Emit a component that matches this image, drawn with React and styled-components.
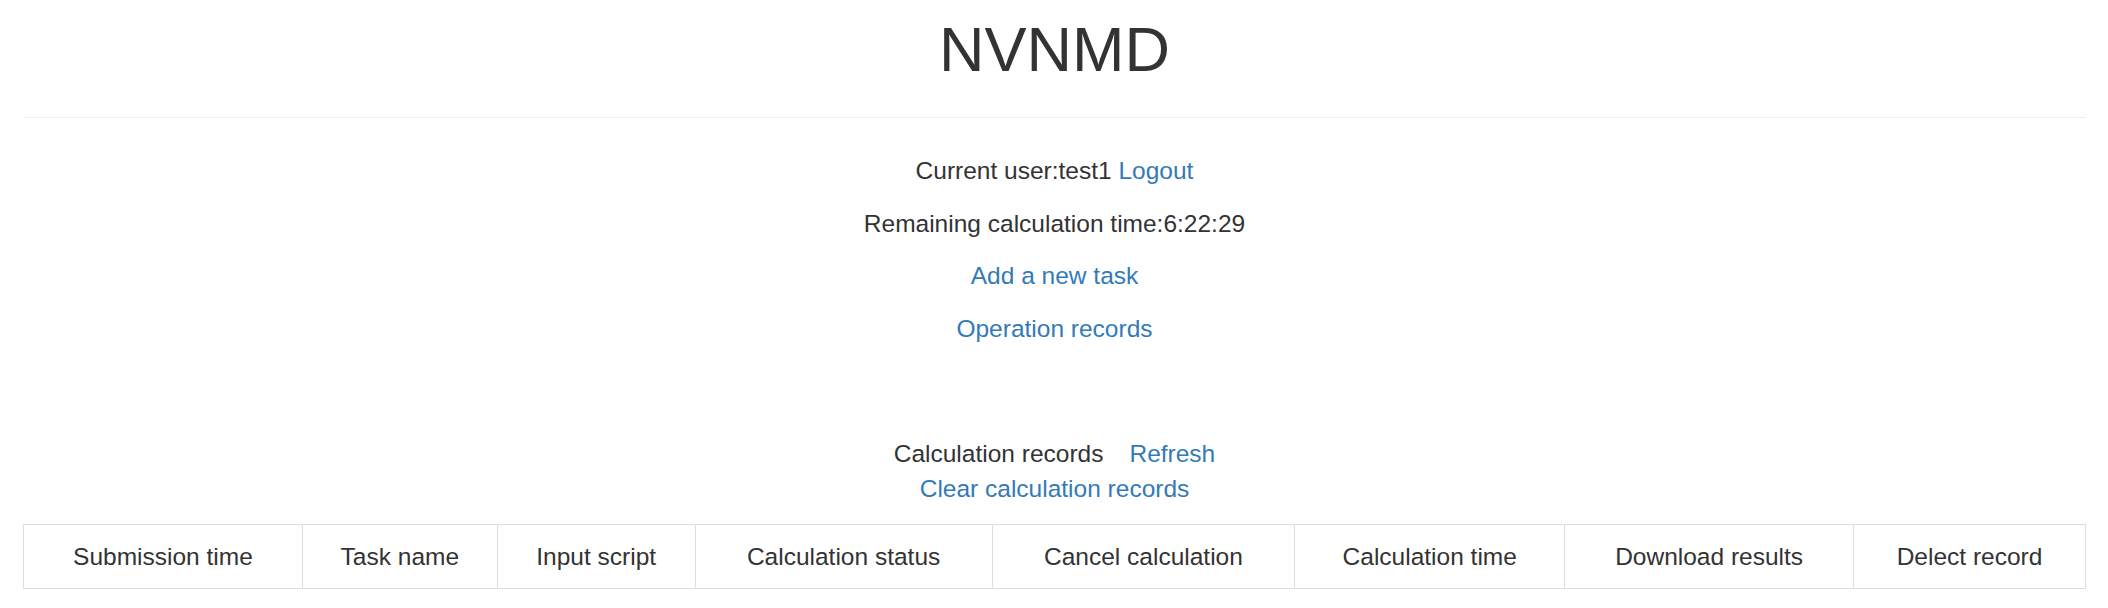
import React from "react";
import styled, { createGlobalStyle } from "styled-components";

const GlobalStyle = createGlobalStyle`
  html, body {
    margin: 0;
    padding: 0;
    background: #fff;
  }
  body {
    font-family: "Liberation Sans", Arial, Helvetica, sans-serif;
    font-size: 24.5px;
    line-height: 35px;
    color: #333;
  }
`;

const Page = styled.div`
  display: flex;
  flex-direction: column;
  padding: 0 22px 0 23px;
  text-align: center;
`;

const Title = styled.h1`
  margin: 14px 0 0;
  font-size: 63px;
  line-height: 70px;
  font-weight: 400;
  color: #333;
`;

const Divider = styled.hr`
  margin: 33px 0 35px;
  border: 0;
  border-top: 1px solid #eee;
  height: 0;
`;

const Line = styled.p`
  margin: 0 0 17.5px;
`;

const Link = styled.a`
  color: #337ab7;
  text-decoration: none;
  cursor: pointer;
  margin-left: ${(p) => (p.$gap ? p.$gap : 0)}px;
`;

const Records = styled.div`
  margin-top: 72.5px;
  display: flex;
  flex-direction: column;
  align-items: center;
`;

const RecordsRow = styled.div`
  display: flex;
  justify-content: center;
`;

const Table = styled.table`
  margin-top: 18.5px;
  width: 100%;
  border-collapse: collapse;
  border-spacing: 0;
`;

const HeadCell = styled.td`
  border: 1px solid #ddd;
  padding: 14px;
  font-weight: 400;
  text-align: center;
  vertical-align: top;
  color: #333;
  white-space: nowrap;
`;

const columns = [
  "Submission time",
  "Task name",
  "Input script",
  "Calculation status",
  "Cancel calculation",
  "Calculation time",
  "Download results",
  "Delect record"
];

const widths = [279, 195, 198, 297, 303, 270, 289, 232];

export default function App() {
  return (
    <>
      <GlobalStyle />
      <Page>
        <Title>NVNMD</Title>
        <Divider />
        <Line>
          Current user:test1 <Link>Logout</Link>
        </Line>
        <Line>Remaining calculation time:6:22:29</Line>
        <Line>
          <Link>Add a new task</Link>
        </Line>
        <Line>
          <Link>Operation records</Link>
        </Line>
        <Records>
          <RecordsRow>
            <span>Calculation records</span>
            <Link $gap={26}>Refresh</Link>
          </RecordsRow>
          <Link>Clear calculation records</Link>
        </Records>
        <Table>
          <colgroup>
            {widths.map((w, i) => (
              <col key={i} style={{ width: w }} />
            ))}
          </colgroup>
          <tbody>
            <tr>
              {columns.map((c) => (
                <HeadCell key={c}>{c}</HeadCell>
              ))}
            </tr>
          </tbody>
        </Table>
      </Page>
    </>
  );
}
